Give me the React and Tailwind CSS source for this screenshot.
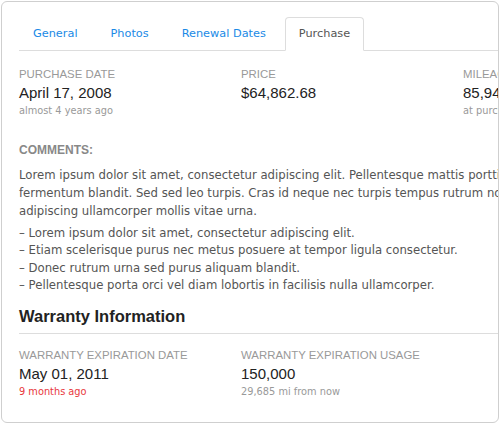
import React from 'react';

const lucida = { fontFamily: '"DejaVu Sans", Verdana, sans-serif' };

const tabs = ['General', 'Photos', 'Renewal Dates', 'Purchase'];

const Field = ({ label, value, note, noteClass = 'text-[#999]' }) => (
  <div className="w-[222px] shrink-0">
    <div className="text-[11.4px] leading-[14px] uppercase text-[#999] font-['Liberation_Sans',Arial,sans-serif]">{label}</div>
    <div className="mt-[3px] text-[15px] leading-[18px] text-[#222] font-['Liberation_Sans',Arial,sans-serif]">{value}</div>
    <div className={`mt-[1px] text-[9.8px] leading-[16px] font-['DejaVu_Sans',sans-serif] ${noteClass}`}>{note}</div>
  </div>
);

export default function App() {
  return (
    <div className="p-px bg-white">
      <div className="w-[498px] h-[422px] border border-[#cfcfcf] rounded-[6px] overflow-hidden bg-white">
        <div className="w-[700px] pl-[17px]">
          {/* tabs */}
          <div className="pt-[15px] flex border-b border-[#ddd]">
            {tabs.map((t) => (
              <div
                key={t}
                className={
                  t === 'Purchase'
                    ? '-mb-px px-[13px] h-[34px] flex items-center border border-[#ddd] border-b-white rounded-t-[4px] bg-white text-[#555] text-[11.3px] mr-[5px] font-[\'DejaVu_Sans\',sans-serif]'
                    : '-mb-px px-[13px] h-[34px] flex items-center border border-transparent text-[#1a8ae6] text-[11.3px] mr-[5px] font-[\'DejaVu_Sans\',sans-serif]'
                }
              >
                {t}
              </div>
            ))}
          </div>

          <div className="pt-[16px] flex">
            <Field label="Purchase Date" value="April 17, 2008" note="almost 4 years ago" />
            <Field label="Price" value="$64,862.68" note="" />
            <Field label="Mileage" value="85,943" note="at purchase" />
          </div>

          <div className="mt-[24px] text-[12px] leading-[14px] font-bold text-[#888] font-['Liberation_Sans',Arial,sans-serif]">COMMENTS:</div>

          <div className="mt-[9px] text-[11.7px] leading-[18px] text-[#555] whitespace-nowrap" style={lucida}>
            <div>Lorem ipsum dolor sit amet, consectetur adipiscing elit. Pellentesque mattis porttitor</div>
            <div>fermentum blandit. Sed sed leo turpis. Cras id neque nec turpis tempus rutrum non</div>
            <div>adipiscing ullamcorper mollis vitae urna.</div>
          </div>

          <div className="mt-[5px] text-[11.7px] leading-[17.4px] text-[#555] whitespace-nowrap" style={lucida}>
            <div>– Lorem ipsum dolor sit amet, consectetur adipiscing elit.</div>
            <div>– Etiam scelerisque purus nec metus posuere at tempor ligula consectetur.</div>
            <div>– Donec rutrum urna sed purus aliquam blandit.</div>
            <div>– Pellentesque porta orci vel diam lobortis in facilisis nulla ullamcorper.</div>
          </div>

          <div className="mt-[10px] pb-[6px] border-b border-[#ddd] text-[16.5px] leading-[22px] font-bold text-[#222] font-['Liberation_Sans',Arial,sans-serif]">
            Warranty Information
          </div>

          <div className="pt-[14px] flex">
            <Field label="Warranty Expiration Date" value="May 01, 2011" note="9 months ago" noteClass="text-[#e8383d]" />
            <Field label="Warranty Expiration Usage" value="150,000" note="29,685 mi from now" />
          </div>
        </div>
      </div>
    </div>
  );
}
